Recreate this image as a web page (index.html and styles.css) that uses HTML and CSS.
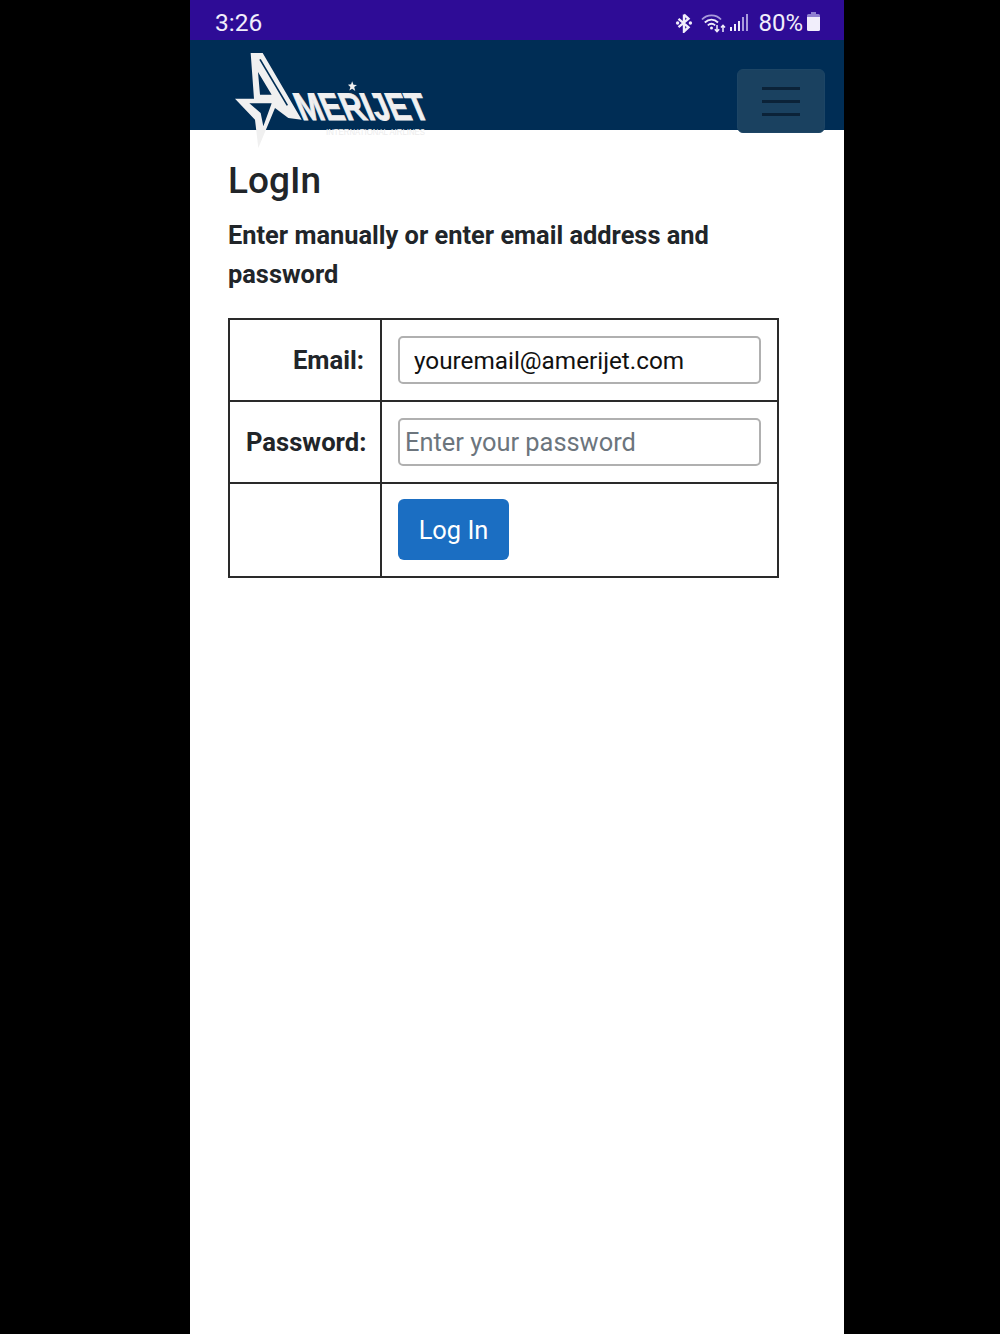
FILE: index.html
```html
<!DOCTYPE html>
<html lang="en">
<head>
    <meta charset="UTF-8">
    <meta name="viewport" content="width=device-width, initial-scale=1.0">
    <title>LogIn</title>
    <link rel="stylesheet" href="styles.css">
</head>
<body>
    <div class="phone">
        <div class="status-bar">
            <span class="status-time">3:26</span>
            <div class="status-icons">
                <svg class="icon-bt" viewBox="0 0 18 20" width="18" height="20">
                    <path d="M9 1.500v17l4.500-4.300L3.500 5.800M9 1.500l4.500 4.300L3.500 14.200" fill="none" stroke="#f1eefb" stroke-width="2.400"/>
                    <circle cx="2.600" cy="10" r="1.700" fill="#f1eefb"/>
                    <circle cx="15.400" cy="10" r="1.700" fill="#f1eefb"/>
                </svg>
                <svg class="icon-wifi" viewBox="0 0 25 20" width="25" height="20">
                    <path d="M1 6.500C6 1 15 1 20 6.500" fill="none" stroke="#a99bdc" stroke-width="1.800"/>
                    <path d="M3.800 9.500C7.800 5.600 13.200 5.600 17 9.500" fill="none" stroke="#f1eefb" stroke-width="1.800"/>
                    <path d="M6.800 12.400C9 10.400 12 10.400 14.200 12.400" fill="none" stroke="#f1eefb" stroke-width="1.800"/>
                    <circle cx="10.500" cy="15" r="1.500" fill="#f1eefb"/>
                    <path d="M16 12v6.500M13.800 16.300l2.200 2.400 2.200-2.400" fill="none" stroke="#f1eefb" stroke-width="1.500"/>
                    <path d="M22 19v-6.500M20 14.500l2-2.200 2 2.200" fill="none" stroke="#f1eefb" stroke-width="1.500"/>
                </svg>
                <div class="signal">
                    <span class="bar bar-1"></span>
                    <span class="bar bar-2"></span>
                    <span class="bar bar-3"></span>
                    <span class="bar bar-4"></span>
                    <span class="bar bar-5"></span>
                </div>
                <span class="status-battery">80%</span>
                <svg class="icon-battery" viewBox="0 0 13 19" width="13" height="19">
                    <path d="M4 0h5v2h2.500a1.500 1.500 0 0 1 1.500 1.500V5H0V3.500A1.500 1.500 0 0 1 1.500 2H4z" fill="#8f7fd0"/>
                    <path d="M0 5h13v12.500a1.500 1.500 0 0 1-1.500 1.500h-10A1.500 1.500 0 0 1 0 17.500z" fill="#f1eefb"/>
                </svg>
            </div>
        </div>

        <header class="site-header">
            <svg class="logo" viewBox="0 0 600 312" width="200" height="104">
                <path class="logo-mark" fill-rule="evenodd" d="M62 15H98L215 215L175 210L135 180L85 300L75 215L15 152H72ZM84 72L90 140H125ZM58 166L92 195L100 235L125 166Z"/>
                <path class="logo-line" d="M90 34L172 172"/>
                <g transform="translate(216,216) skewX(23)">
                    <text class="logo-word" x="0" y="0" textLength="390" lengthAdjust="spacingAndGlyphs">MERIJET</text>
                </g>
                <path class="logo-mark" d="M385 88l4 10 10 1-8 6 3 11-9-6-8 5 3-10-7-7 9-1z" transform="translate(-34,8) scale(1.040)"/>
                <text class="logo-tag" x="288" y="262" textLength="297" lengthAdjust="spacingAndGlyphs">INTERNATIONAL AIRLINES</text>
            </svg>
            <button class="menu-toggle" type="button" aria-label="Menu">
                <span class="menu-line"></span>
                <span class="menu-line"></span>
                <span class="menu-line"></span>
            </button>
        </header>

        <main class="content">
            <h1>LogIn</h1>
            <h3>Enter manually or enter email address and password</h3>
            <table class="login-table">
                <tr>
                    <th><label for="email">Email:</label></th>
                    <td><input class="field field-filled" type="text" id="email" value="youremail@amerijet.com"></td>
                </tr>
                <tr>
                    <th><label for="password">Password:</label></th>
                    <td><input class="field" type="password" id="password" placeholder="Enter your password"></td>
                </tr>
                <tr>
                    <th></th>
                    <td class="button-cell"><button class="login-button" type="button">Log In</button></td>
                </tr>
            </table>
        </main>
    </div>
</body>
</html>
```

FILE: styles.css
```css
* {
    box-sizing: border-box;
}
body {
    margin: 0;
    padding-left: 190px;
    background: #000;
    font-family: Roboto, "Liberation Sans", sans-serif;
    color: #212529;
}
.phone {
    width: 654px;
    height: 1334px;
    background: #fff;
    overflow: hidden;
}
.status-bar {
    display: flex;
    justify-content: space-between;
    align-items: center;
    height: 40px;
    padding: 5px 24px 0 25px;
    background: #2e0c96;
    color: #f1eefb;
    font-size: 24.500px;
}
.status-icons {
    display: flex;
    align-items: center;
}
.icon-bt {
    margin-right: 8px;
}
.icon-wifi {
    margin-right: 3px;
}
.signal {
    display: flex;
    align-items: flex-end;
    gap: 2px;
    height: 17px;
    margin: 0 10px 0 1px;
}
.bar {
    width: 2px;
    background: #a99bdc;
}
.bar-1 { height: 4px; background: #f1eefb; }
.bar-2 { height: 7px; background: #f1eefb; }
.bar-3 { height: 10px; background: #f1eefb; }
.bar-4 { height: 14px; }
.bar-5 { height: 17px; }
.status-battery {
    margin-right: 4px;
    font-size: 24px;
}
.icon-battery {
    margin-top: -2px;
}
.site-header {
    display: flex;
    justify-content: space-between;
    align-items: flex-start;
    height: 90px;
    padding: 0 19px 0 40px;
    background: #002d55;
}
.logo {
    flex: none;
    margin-top: 8px;
    overflow: visible;
}
.logo-mark {
    fill: #f0f0f0;
}
.logo-line {
    fill: none;
    stroke: #002d55;
    stroke-width: 5;
}
.logo-word {
    fill: #f0f0f0;
    stroke: #f0f0f0;
    stroke-width: 3;
    font-family: "Liberation Sans", sans-serif;
    font-weight: 700;
    font-size: 116px;
}
.logo-tag {
    fill: #ececec;
    font-family: "Liberation Sans", sans-serif;
    font-size: 28px;
}
.menu-toggle {
    flex: none;
    display: flex;
    flex-direction: column;
    align-items: center;
    gap: 10px;
    width: 88px;
    height: 64px;
    margin-top: 29px;
    padding: 17px 0 0;
    background: #1a4160;
    border: 1px solid #1d4565;
    border-radius: 6px;
}
.menu-line {
    width: 38px;
    height: 3px;
    background: #0b2238;
}
.content {
    padding: 28px 38px 0;
}
h1 {
    margin: 0;
    font-size: 37px;
    font-weight: 500;
    line-height: 46px;
}
h3 {
    margin: 12px 0 0;
    font-size: 25.400px;
    font-weight: 700;
    line-height: 38.500px;
}
.login-table {
    width: 551px;
    margin-top: 25px;
    border-collapse: collapse;
    table-layout: fixed;
}
.login-table th,
.login-table td {
    padding: 16px;
    border: 2px solid #2a2a2a;
    font-size: 25.600px;
}
.login-table th {
    width: 152px;
    text-align: right;
    font-weight: 700;
}
.login-table td {
    line-height: 0;
}
.login-table .button-cell {
    padding-top: 15px;
}
.field {
    width: 363px;
    height: 48px;
    padding: 0 5px;
    border: 2px solid #b0b0b0;
    border-radius: 5px;
    font-family: Roboto, "Liberation Sans", sans-serif;
    font-size: 25.400px;
    color: #111;
}
.field::placeholder {
    color: #6c757d;
}
.field-filled {
    padding-left: 14px;
    font-size: 24.300px;
}
.login-button {
    width: 111px;
    height: 61px;
    padding: 0;
    border: none;
    border-radius: 6px;
    background: #1b6ec2;
    color: #fff;
    font-family: Roboto, "Liberation Sans", sans-serif;
    font-size: 25.400px;
}
```
